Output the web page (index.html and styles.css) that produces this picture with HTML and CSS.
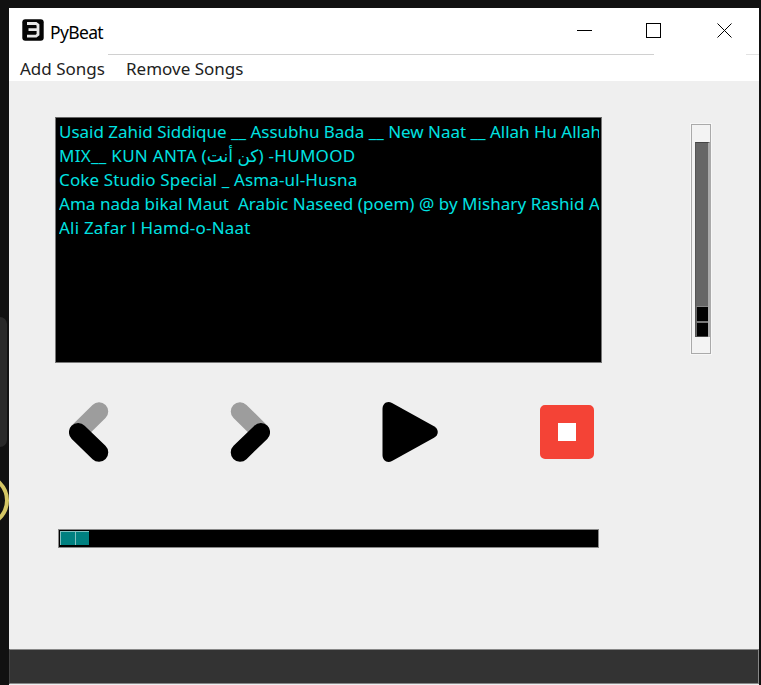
FILE: index.html
```html
<!DOCTYPE html>
<html lang="en">
<head>
<meta charset="utf-8">
<title>PyBeat</title>
<link rel="stylesheet" href="styles.css">
</head>
<body>
<div class="backdrop-panel"></div>
<div class="backdrop-ring"></div>
<main class="window">
  <header class="titlebar">
    <svg class="logo" viewBox="0 0 22 22"><rect x=".3" y=".3" width="21.4" height="21.4" rx="3" fill="#050505"/><path d="M5 4.5H14L16 6V15.500L14 17.200H5M6.500 10.700H15" fill="none" stroke="#e8e8e8" stroke-width="2.800"/></svg>
    <h1 class="title">PyBeat</h1>
    <svg class="caption" viewBox="0 0 160 18" shape-rendering="crispEdges"><path d="M1 9.5H16M70.500 2.500H84.500V16.500H70.500Z" fill="none" stroke="#000"/><path d="M141.500 2.500L155.500 16.500M155.500 2.500L141.500 16.500" stroke="#000" fill="none" shape-rendering="auto"/></svg>
  </header>
  <div class="divider"></div>
  <nav class="menu"><span class="add">Add Songs</span><span class="remove">Remove Songs</span></nav>
  <section class="body">
    <div class="top">
      <ul class="songs">
        <li class="s1">Usaid Zahid Siddique __ Assubhu Bada __ New Naat __ Allah Hu Allah</li>
        <li class="s2">MIX__ KUN ANTA (كن أنت) -HUMOOD</li>
        <li class="s3">Coke Studio Special _ Asma-ul-Husna</li>
        <li class="s4">Ama nada bikal Maut&nbsp; Arabic Naseed (poem) @ by Mishary Rashid A</li>
        <li class="s5">Ali Zafar l Hamd-o-Naat</li>
      </ul>
      <div class="volume"><div class="track"><div class="thumb"><i></i><i></i></div></div></div>
    </div>
    <div class="controls">
      <svg class="prev" viewBox="0 0 40 60"><path d="M9.200 30L30 9.500" stroke="#9d9d9d"/><path d="M9.200 30.300L30 50.500" stroke="#000"/></svg>
      <svg class="next" viewBox="0 0 40 60"><path d="M30.800 30L10 9.500" stroke="#9d9d9d"/><path d="M30.800 30.300L10 50.500" stroke="#000"/></svg>
      <svg class="play" viewBox="0 0 56 60"><path d="M.5 7C.5 1.500 5-1.500 10 1L52 24.200C57 27 57 33 52 35.800L10 59C5 61.500 .5 58.500 .5 53Z"/></svg>
      <div class="stop"></div>
    </div>
    <div class="progress"><i></i><i></i></div>
  </section>
  <footer class="status"></footer>
</main>
</body>
</html>
```
FILE: styles.css
```css
* { box-sizing: border-box; }
body { margin: 0; width: 761px; height: 685px; overflow: hidden; position: relative; background: #111; font-family: "Noto Sans", "Open Sans", "DejaVu Sans", sans-serif; }
svg { display: block; }
.backdrop-panel { position: absolute; left: -20px; top: 317px; width: 27px; height: 130px; border-radius: 7px; background: #292929; }
.backdrop-ring { position: absolute; left: -44px; top: 474px; width: 53px; height: 53px; border: 4px solid #d5c765; border-radius: 50%; }
.window { position: relative; margin: 8px 2px 0 9px; height: 677px; background: #efefef; display: flex; flex-direction: column; }
.titlebar { height: 46px; background: #fff; display: flex; align-items: flex-start; }
.logo { width: 22px; height: 22px; margin: 11px 0 0 13px; }
.title { margin: 11px 0 0 6px; width: 70px; font-size: 17.5px; line-height: 26px; font-weight: 400; letter-spacing: -.65px; color: #000; }
.caption { width: 160px; height: 18px; margin: 13px 23px 0 auto; }
.divider { height: 1px; background: linear-gradient(90deg, #fff 99px, #d0d0d0 99px 645px, #fff 645px 737px, #e2e2e2 737px); }
.menu { height: 26px; background: #fff; display: flex; gap: 21px; padding-left: 11px; font-size: 17px; line-height: 28px; white-space: nowrap; color: #222; }
.add { width: 85px; }
.body { height: 568px; padding: 36px 48px 0 46px; }
.top { display: flex; justify-content: space-between; }
.songs { width: 547px; height: 246px; margin: 0; padding: 1px 2px 0 3px; list-style: none; background: #000; border: 1px solid #777; border-top-color: #666; font-size: 17px; color: #00e2e2; overflow: hidden; }
.songs li { height: 24px; line-height: 25px; overflow: hidden; white-space: pre; }
.s1 { letter-spacing: -.02px; }
.s2 { letter-spacing: .28px; }
.s3 { letter-spacing: .14px; }
.s4 { letter-spacing: .05px; }
.s5 { letter-spacing: .21px; }
.volume { width: 20px; height: 230px; margin-top: 7px; padding: 17px 1px 0 3px; border: 1px solid #aaa; background: #f3f3f3; box-shadow: 0 0 0 1px #f7f7f7; }
.track { width: 15px; height: 195px; padding-top: 163px; background: #666; border-left: 1px solid #555; border-top: 1px solid #444; border-right: 2px solid #aaa; }
.thumb i { display: block; width: 12px; height: 15px; background: #000; border-top: 1px solid #888; border-left: 1px solid #666; }
.thumb i + i { height: 16px; border-top: 2px solid #777; border-bottom: 1px solid #444; }
.controls { display: flex; align-items: center; height: 60px; margin: 39px 0 0 14px; }
.prev, .next { width: 40px; height: 60px; fill: none; stroke-width: 18.5px; stroke-linecap: round; }
.next { margin-left: 121px; }
.play { width: 56px; height: 60px; margin-left: 112px; }
.stop { width: 54px; height: 54px; margin-left: 102px; border: 18px solid #f44336; border-radius: 5px; background: #fff; }
.progress { display: flex; width: 541px; height: 19px; margin: 67px 0 0 3px; padding: 1px; background: #000; border: 1px solid #888; }
.progress i { width: 15px; height: 14px; background: #008080; border: solid #80c0c0; border-width: 1px 0 0 1px; }
.progress i + i { width: 14px; }
.status { height: 35px; background: #333; border: 1px solid #888; border-left-color: #444; }
```
